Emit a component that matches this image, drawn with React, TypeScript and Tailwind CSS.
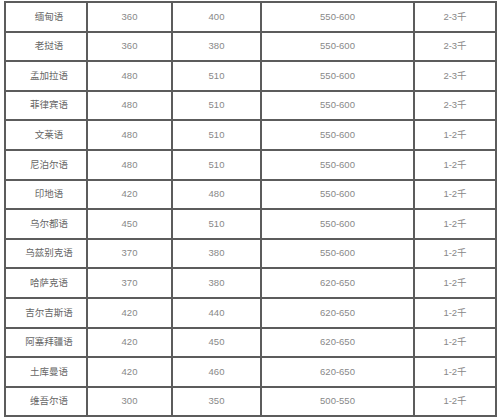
const rows: [string, string, string, string, string][] = [
  ["缅甸语", "360", "400", "550-600", "2-3千"],
  ["老挝语", "360", "380", "550-600", "2-3千"],
  ["孟加拉语", "480", "510", "550-600", "2-3千"],
  ["菲律宾语", "480", "510", "550-600", "2-3千"],
  ["文莱语", "480", "510", "550-600", "1-2千"],
  ["尼泊尔语", "480", "510", "550-600", "1-2千"],
  ["印地语", "420", "480", "550-600", "1-2千"],
  ["乌尔都语", "450", "510", "550-600", "1-2千"],
  ["乌兹别克语", "370", "380", "550-600", "1-2千"],
  ["哈萨克语", "370", "380", "620-650", "1-2千"],
  ["吉尔吉斯语", "420", "440", "620-650", "1-2千"],
  ["阿塞拜疆语", "420", "450", "620-650", "1-2千"],
  ["土库曼语", "420", "460", "620-650", "1-2千"],
  ["维吾尔语", "300", "350", "500-550", "1-2千"],
];

export default function App() {
  return (
    <div className="w-[500px] h-[418px] overflow-hidden bg-white pl-[4px] pt-[1px]">
      <table
        className="w-[491px] table-fixed border-collapse text-[9.5px] text-[#888]"
        style={{ fontFamily: '"Liberation Sans", "Noto Sans CJK SC", sans-serif' }}
      >
        <colgroup>
          <col className="w-[82px]" />
          <col className="w-[85px]" />
          <col className="w-[89px]" />
          <col className="w-[153px]" />
          <col className="w-[82px]" />
        </colgroup>
        <tbody>
          {rows.map((r) => (
            <tr key={r[0]} className="h-[29.6px]">
              <td className="border-2 border-[#5c5c5c] text-center p-0 pl-[6px] text-[#666]">{r[0]}</td>
              <td className="border-2 border-[#5c5c5c] text-center p-0">{r[1]}</td>
              <td className="border-2 border-[#5c5c5c] text-center p-0">{r[2]}</td>
              <td className="border-2 border-[#5c5c5c] text-center p-0">{r[3]}</td>
              <td className="border-2 border-[#5c5c5c] text-center p-0">{r[4]}</td>
            </tr>
          ))}
        </tbody>
      </table>
    </div>
  );
}
